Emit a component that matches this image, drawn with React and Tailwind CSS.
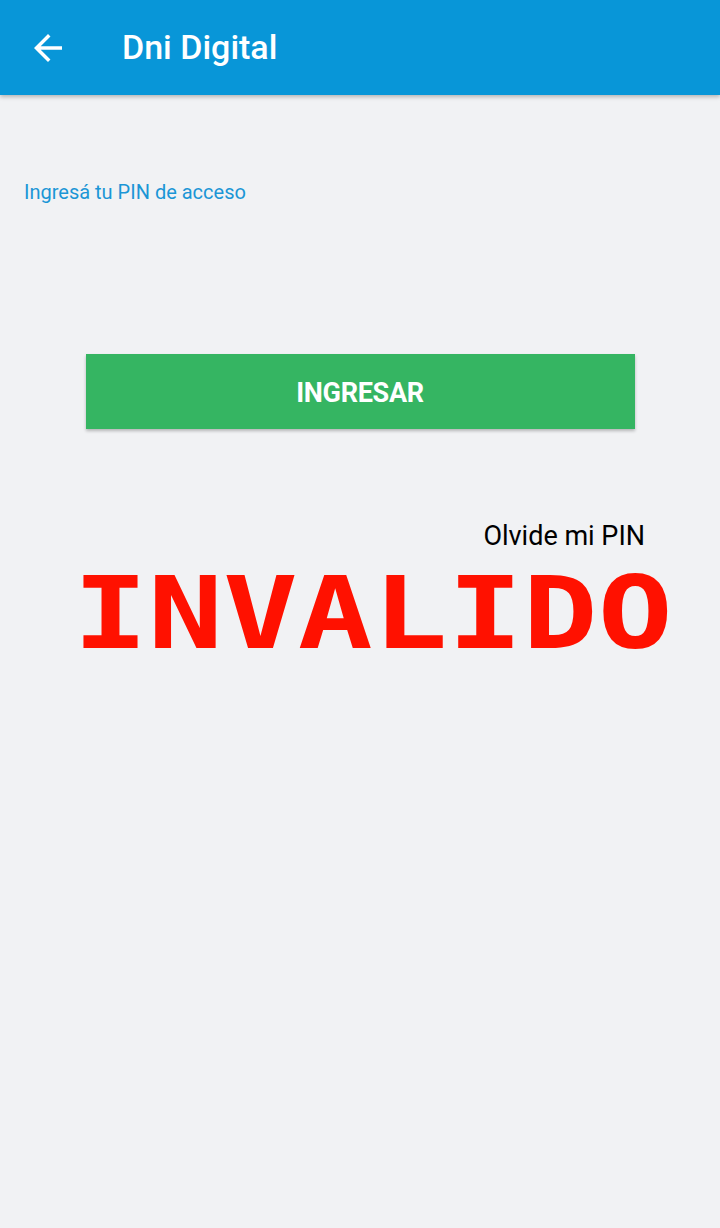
export default function App() {
  return (
    <div className="min-h-[1228px] w-[720px] overflow-hidden bg-[#f1f2f4] font-['Roboto',sans-serif]">
      {/* Toolbar */}
      <div className="flex h-[95px] items-center bg-[#0896d8] shadow-[0_2px_4px_rgba(0,0,0,0.25)]">
        <svg viewBox="0 0 24 24" className="ml-[27px] h-[42px] w-[42px]" fill="#ffffff">
          <path d="M20 11H7.83l5.59-5.59L12 4l-8 8 8 8 1.41-1.41L7.83 13H20v-2z" />
        </svg>
        <h1 className="ml-[53px] text-[34px] font-medium text-white">Dni Digital</h1>
      </div>

      <div className="flex flex-col">
        <p className="ml-[24px] mt-[84px] text-[20px] leading-[26px] text-[#1b96d6]">
          Ingresá tu PIN de acceso
        </p>

        <button className="mx-auto mt-[149px] flex h-[75px] w-[549px] items-center justify-center bg-[#35b562] pt-[3px] text-[27px] font-bold tracking-[-0.3px] text-white shadow-[0_2px_3px_rgba(0,0,0,0.25)]">
          INGRESAR
        </button>

        <div className="mr-[75px] mt-[91px] text-right text-[27px] leading-[32px] text-black">
          Olvide mi PIN
        </div>

        <div className="ml-[73px] mt-[17px] origin-left scale-x-[1.245] font-['DejaVu_Sans_Mono',monospace] text-[100px] font-bold leading-[90px] text-[#ff1100]">
          INVALIDO
        </div>
      </div>
    </div>
  );
}
